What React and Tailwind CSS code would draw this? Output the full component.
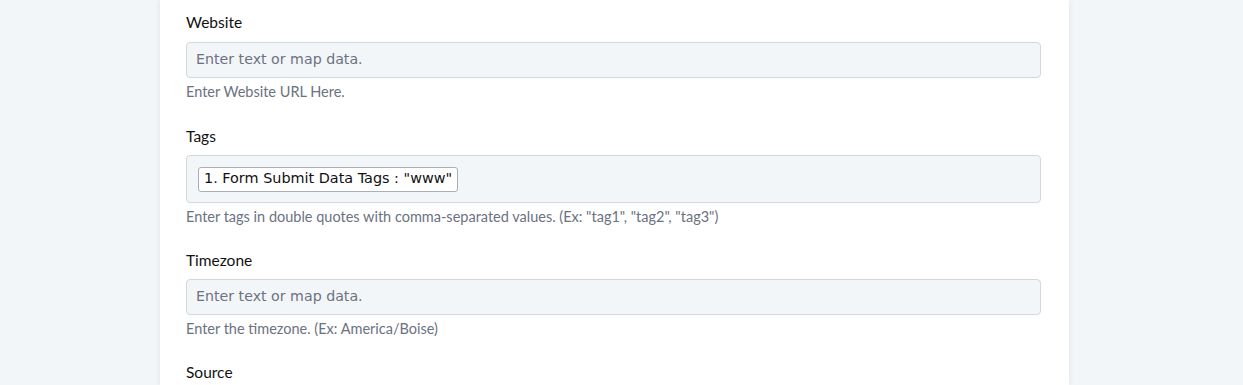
export default function App() {
  const label = "text-[15.5px] leading-5 text-[#111] font-['Lato',sans-serif]";
  const help = "mt-[5px] text-[14.5px] leading-[18px] text-[#6b7280] font-['Lato',sans-serif]";
  const input =
    "h-[36px] flex items-center px-[9px] rounded-[4px] border border-[#d3d8de] bg-[#f3f6f9] text-[14.2px] text-[#6b7280] font-['DejaVu_Sans',sans-serif]";
  return (
    <div className="w-[1243px] h-[385px] overflow-hidden bg-[#f3f6f9] flex">
      <div className="ml-[160px] w-[909px] bg-white shadow-[0_0_6px_rgba(0,0,0,0.08)] pl-[26px] pr-[28px] pt-[12px]">
        <div className={label}>Website</div>
        <div className={input + " mt-[10px]"}>Enter text or map data.</div>
        <div className={help}>Enter Website URL Here.</div>

        <div className={label + " mt-[25px]"}>Tags</div>
        <div className="mt-[9px] h-[48px] flex items-center px-[11px] rounded-[4px] border border-[#d3d8de] bg-[#f3f6f9]">
          <span className="h-[25px] flex items-center px-[5px] rounded-[3px] border border-[#a9afb7] bg-white text-[14.4px] text-[#111] font-['DejaVu_Sans',sans-serif]">
            1. Form Submit Data Tags : "www"
          </span>
        </div>
        <div className={help}>
          Enter tags in double quotes with comma-separated values. (Ex: "tag1", "tag2", "tag3")
        </div>

        <div className={label + " mt-[24px]"}>Timezone</div>
        <div className={input + " mt-[9px]"}>Enter text or map data.</div>
        <div className={help}>Enter the timezone. (Ex: America/Boise)</div>

        <div className={label + " mt-[24px]"}>Source</div>
      </div>
    </div>
  );
}
